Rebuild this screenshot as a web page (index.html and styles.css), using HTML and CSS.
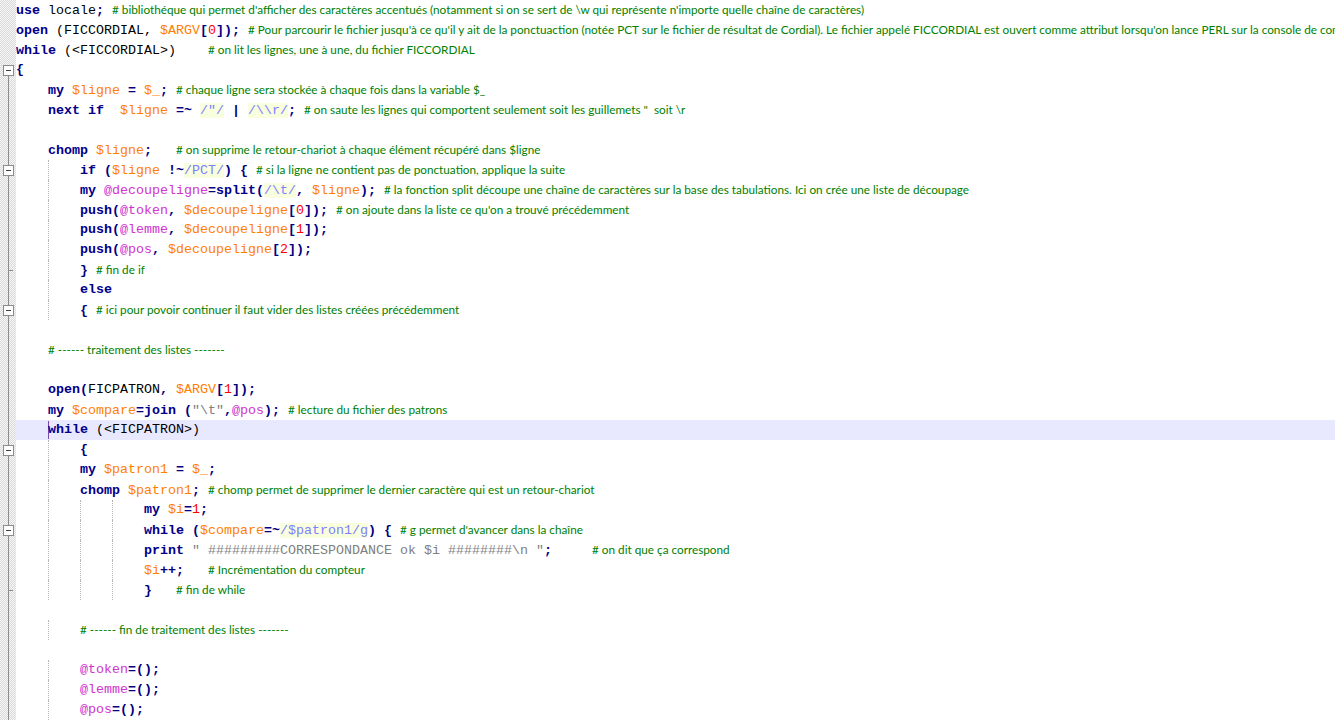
FILE: index.html
```html
<!DOCTYPE html>
<html lang="fr">
<head>
<meta charset="utf-8">
<title>perl</title>
<link rel="stylesheet" href="styles.css">
</head>
<body>
<div class="editor">
<div class="line"><div class="fm"></div><div class="tx"><span class="k">use</span> locale<span class="o">;</span> <span class="c"># bibliothéque qui permet d'afficher des caractères accentués (notamment si on se sert de \w qui représente n'importe quelle chaîne de caractères)</span></div></div>
<div class="line"><div class="fm"></div><div class="tx"><span class="k">open</span> (FICCORDIAL, <span class="s">$ARGV</span><span class="o">[</span><span class="n">0</span><span class="o">]);</span> <span class="c"># Pour parcourir le fichier jusqu'à ce qu'il y ait de la ponctuaction (notée PCT sur le fichier de résultat de Cordial). Le fichier appelé FICCORDIAL est ouvert comme attribut lorsqu'on lance PERL sur la console de commande</span></div></div>
<div class="line"><div class="fm"></div><div class="tx"><span class="k">while</span> (&lt;FICCORDIAL&gt;)&#9;<span class="c"># on lit les lignes, une à une, du fichier FICCORDIAL</span></div></div>
<div class="line"><div class="fm start"><span class="box"></span></div><div class="tx"><span class="o">{</span></div></div>
<div class="line"><div class="fm ln"></div><div class="tx"><span class="t"></span><span class="k">my</span> <span class="s">$ligne</span> <span class="o">=</span> <span class="s">$_</span><span class="o">;</span> <span class="c"># chaque ligne sera stockée à chaque fois dans la variable $_</span></div></div>
<div class="line"><div class="fm ln"></div><div class="tx"><span class="t"></span><span class="k">next</span> <span class="k">if</span>  <span class="s">$ligne</span> <span class="o">=~</span> <span class="r">/"/</span> <span class="o">|</span> <span class="r">/\\r/</span><span class="o">;</span> <span class="c"># on saute les lignes qui comportent seulement soit les guillemets "  soit \r</span></div></div>
<div class="line"><div class="fm ln"></div><div class="tx"></div></div>
<div class="line"><div class="fm ln"></div><div class="tx"><span class="t"></span><span class="k">chomp</span> <span class="s">$ligne</span><span class="o">;</span>&#9;<span class="c"># on supprime le retour-chariot à chaque élément récupéré dans $ligne</span></div></div>
<div class="line"><div class="fm ln"><span class="box"></span></div><div class="tx"><span class="t"></span><span class="t g"></span><span class="k">if</span> <span class="o">(</span><span class="s">$ligne</span> <span class="o">!~</span><span class="r">/PCT/</span><span class="o">)</span> <span class="o">{</span> <span class="c"># si la ligne ne contient pas de ponctuation, applique la suite</span></div></div>
<div class="line"><div class="fm ln"></div><div class="tx"><span class="t"></span><span class="t g"></span><span class="k">my</span> <span class="a">@decoupeligne</span><span class="o">=</span><span class="k">split</span><span class="o">(</span><span class="r">/\t/</span><span class="o">,</span> <span class="s">$ligne</span><span class="o">);</span> <span class="c"># la fonction split découpe une chaîne de caractères sur la base des tabulations. Ici on crée une liste de découpage</span></div></div>
<div class="line"><div class="fm ln"></div><div class="tx"><span class="t"></span><span class="t g"></span><span class="k">push</span><span class="o">(</span><span class="a">@token</span><span class="o">,</span> <span class="s">$decoupeligne</span><span class="o">[</span><span class="n">0</span><span class="o">]);</span> <span class="c"># on ajoute dans la liste ce qu'on a trouvé précédemment</span></div></div>
<div class="line"><div class="fm ln"></div><div class="tx"><span class="t"></span><span class="t g"></span><span class="k">push</span><span class="o">(</span><span class="a">@lemme</span><span class="o">,</span> <span class="s">$decoupeligne</span><span class="o">[</span><span class="n">1</span><span class="o">]);</span></div></div>
<div class="line"><div class="fm ln"></div><div class="tx"><span class="t"></span><span class="t g"></span><span class="k">push</span><span class="o">(</span><span class="a">@pos</span><span class="o">,</span> <span class="s">$decoupeligne</span><span class="o">[</span><span class="n">2</span><span class="o">]);</span></div></div>
<div class="line"><div class="fm end"></div><div class="tx"><span class="t"></span><span class="t g"></span><span class="o">}</span> <span class="c"># fin de if</span></div></div>
<div class="line"><div class="fm ln"></div><div class="tx"><span class="t"></span><span class="t g"></span><span class="k">else</span></div></div>
<div class="line"><div class="fm ln"><span class="box"></span></div><div class="tx"><span class="t"></span><span class="t g"></span><span class="o">{</span> <span class="c"># ici pour povoir continuer il faut vider des listes créées précédemment</span></div></div>
<div class="line"><div class="fm ln"></div><div class="tx"></div></div>
<div class="line"><div class="fm ln"></div><div class="tx"><span class="t"></span><span class="c"># ------ traitement des listes -------</span></div></div>
<div class="line"><div class="fm ln"></div><div class="tx"></div></div>
<div class="line"><div class="fm ln"></div><div class="tx"><span class="t"></span><span class="k">open</span><span class="o">(</span>FICPATRON<span class="o">,</span> <span class="s">$ARGV</span><span class="o">[</span><span class="n">1</span><span class="o">]);</span></div></div>
<div class="line"><div class="fm ln"></div><div class="tx"><span class="t"></span><span class="k">my</span> <span class="s">$compare</span><span class="o">=</span><span class="k">join</span> <span class="o">(</span><span class="q">"\t"</span><span class="o">,</span><span class="a">@pos</span><span class="o">);</span> <span class="c"># lecture du fichier des patrons</span></div></div>
<div class="line"><div class="fm ln"></div><div class="tx cur"><span class="t"></span><span class="caret"></span><span class="k">while</span> (&lt;FICPATRON&gt;)</div></div>
<div class="line"><div class="fm ln"><span class="box"></span></div><div class="tx"><span class="t"></span><span class="t g"></span><span class="o">{</span></div></div>
<div class="line"><div class="fm ln"></div><div class="tx"><span class="t"></span><span class="t g"></span><span class="k">my</span> <span class="s">$patron1</span> <span class="o">=</span> <span class="s">$_</span><span class="o">;</span></div></div>
<div class="line"><div class="fm ln"></div><div class="tx"><span class="t"></span><span class="t g"></span><span class="k">chomp</span> <span class="s">$patron1</span><span class="o">;</span> <span class="c"># chomp permet de supprimer le dernier caractère qui est un retour-chariot</span></div></div>
<div class="line"><div class="fm ln"></div><div class="tx"><span class="t"></span><span class="t g"></span><span class="t g"></span><span class="t g"></span><span class="k">my</span> <span class="s">$i</span><span class="o">=</span><span class="n">1</span><span class="o">;</span></div></div>
<div class="line"><div class="fm ln"><span class="box"></span></div><div class="tx"><span class="t"></span><span class="t g"></span><span class="t g"></span><span class="t g"></span><span class="k">while</span> <span class="o">(</span><span class="s">$compare</span><span class="o">=~</span><span class="r">/$patron1/g</span><span class="o">)</span> <span class="o">{</span> <span class="c"># g permet d'avancer dans la chaîne</span></div></div>
<div class="line"><div class="fm ln"></div><div class="tx"><span class="t"></span><span class="t g"></span><span class="t g"></span><span class="t g"></span><span class="k">print</span> <span class="q">" #########CORRESPONDANCE ok $i ########\n "</span><span class="o">;</span>&#9;&#9;<span class="c"># on dit que ça correspond</span></div></div>
<div class="line"><div class="fm ln"></div><div class="tx"><span class="t"></span><span class="t g"></span><span class="t g"></span><span class="t g"></span><span class="s">$i</span><span class="o">++;</span>&#9;<span class="c"># Incrémentation du compteur</span></div></div>
<div class="line"><div class="fm end"></div><div class="tx"><span class="t"></span><span class="t g"></span><span class="t g"></span><span class="t g"></span><span class="o">}</span>&#9;<span class="c"># fin de while</span></div></div>
<div class="line"><div class="fm ln"></div><div class="tx"></div></div>
<div class="line"><div class="fm ln"></div><div class="tx"><span class="t"></span><span class="t g"></span><span class="c"># ------ fin de traitement des listes -------</span></div></div>
<div class="line"><div class="fm ln"></div><div class="tx"></div></div>
<div class="line"><div class="fm ln"></div><div class="tx"><span class="t"></span><span class="t g"></span><span class="a">@token</span><span class="o">=();</span></div></div>
<div class="line"><div class="fm ln"></div><div class="tx"><span class="t"></span><span class="t g"></span><span class="a">@lemme</span><span class="o">=();</span></div></div>
<div class="line"><div class="fm ln"></div><div class="tx"><span class="t"></span><span class="t g"></span><span class="a">@pos</span><span class="o">=();</span></div></div>
</div>
</body>
</html>
```

FILE: styles.css
```css
html, body {
  margin: 0;
  padding: 0;
  background: #ffffff;
}
body {
  width: 1335px;
  height: 721px;
  overflow: hidden;
}
.editor {
  display: flex;
  flex-direction: column;
  width: 1335px;
}
.line {
  display: flex;
  height: 20px;
}
.fm {
  flex: 0 0 16px;
  height: 20px;
  box-sizing: border-box;
  padding: 5px 0 0 3px;
  display: flex;
  align-items: flex-start;
  background: repeating-conic-gradient(#d9d9d9 0 25%, #f7f7f7 0 50%) 0 0 / 2px 2px;
}
.fm.ln {
  background:
    linear-gradient(#8c8c8c, #8c8c8c) 8px 0 / 1px 100% no-repeat,
    repeating-conic-gradient(#d9d9d9 0 25%, #f7f7f7 0 50%) 0 0 / 2px 2px;
}
.fm.start {
  background:
    linear-gradient(#8c8c8c, #8c8c8c) 8px 10px / 1px 10px no-repeat,
    repeating-conic-gradient(#d9d9d9 0 25%, #f7f7f7 0 50%) 0 0 / 2px 2px;
}
.fm.end {
  background:
    linear-gradient(#8c8c8c, #8c8c8c) 8px 0 / 1px 100% no-repeat,
    linear-gradient(#8c8c8c, #8c8c8c) 8px 10px / 5px 1px no-repeat,
    repeating-conic-gradient(#d9d9d9 0 25%, #f7f7f7 0 50%) 0 0 / 2px 2px;
}
.box {
  width: 11px;
  height: 11px;
  box-sizing: border-box;
  border: 1px solid #8c8c8c;
  background:
    linear-gradient(#404040, #404040) center / 5px 1px no-repeat,
    #ffffff;
}
.tx {
  flex: 1;
  min-width: 0;
  height: 20px;
  overflow: hidden;
  white-space: pre;
  tab-size: 32px;
  font-family: "Liberation Mono", "Courier New", monospace;
  font-size: 13.33px;
  line-height: 20px;
  color: #000000;
}
.tx.cur {
  background: #e8e8ff;
}
.t {
  display: inline-block;
  width: 32px;
  height: 20px;
  vertical-align: top;
  box-sizing: border-box;
}
.t.g {
  border-left: 1px dotted #b4b4b4;
}
.caret {
  display: inline-block;
  width: 0;
  height: 18px;
  margin-top: 1px;
  vertical-align: top;
  border-left: 1px solid #7a4ab0;
  margin-right: -1px;
}
.k {
  color: #00008b;
  font-weight: bold;
}
.o {
  color: #000080;
  font-weight: bold;
}
.s {
  color: #ff8000;
}
.a {
  color: #cf34cf;
}
.n {
  color: #ff0000;
}
.q {
  color: #808080;
}
.r {
  color: #8080ff;
  background: #f8fede;
}
.c {
  color: #008000;
  font-family: Lato, "Open Sans", sans-serif;
  font-size: 11.75px;
}
```
